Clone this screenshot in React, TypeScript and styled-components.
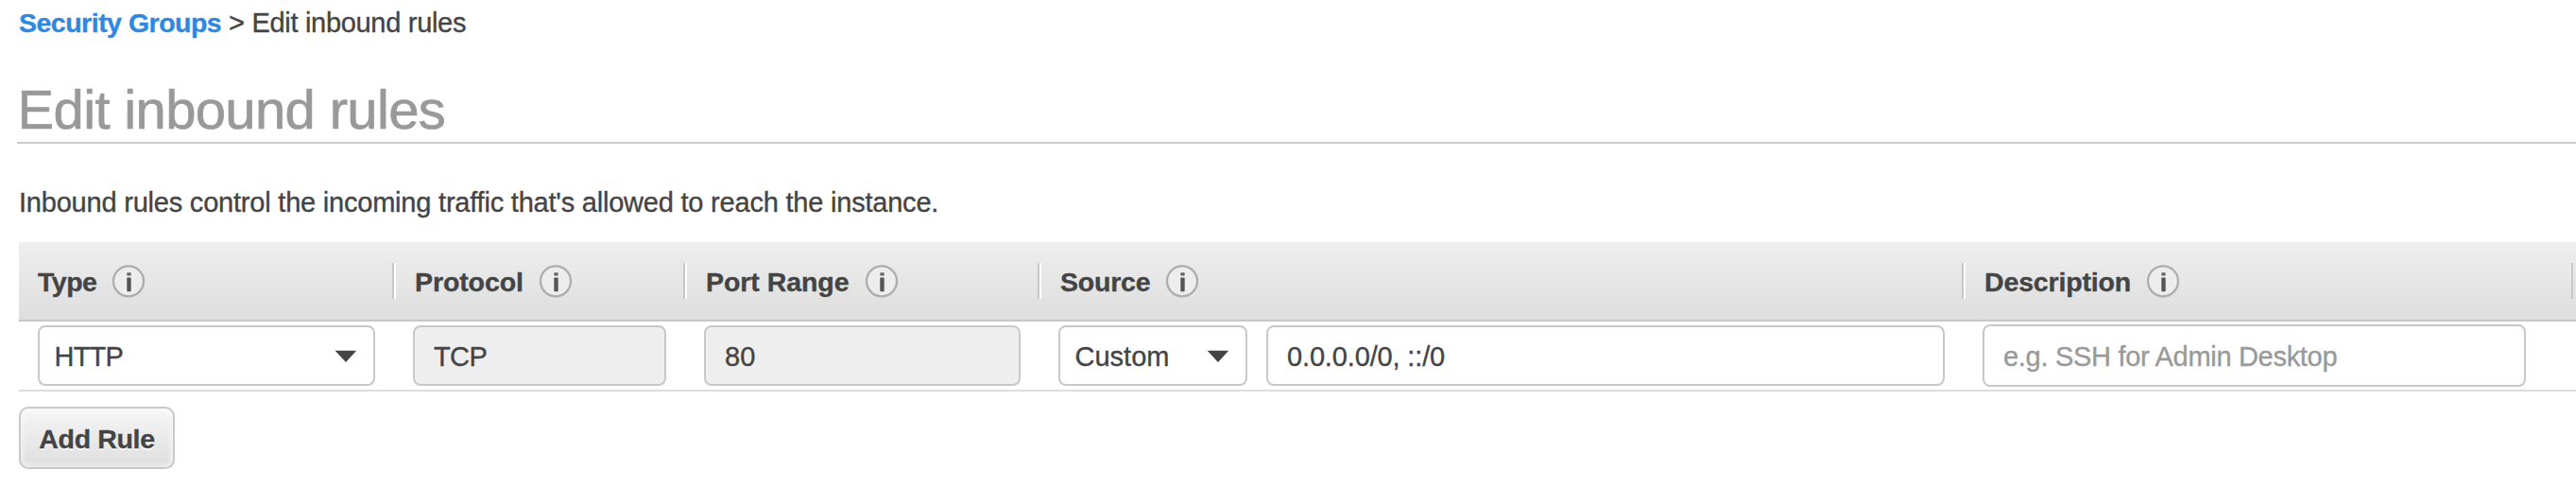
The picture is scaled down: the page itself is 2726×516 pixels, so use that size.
import React from "react";
import styled, { createGlobalStyle, css } from "styled-components";

const GlobalStyle = createGlobalStyle`
  *, *::before, *::after { box-sizing: border-box; }
  body {
    margin: 0;
    background: #fff;
    color: #444;
    font-family: "Liberation Sans", Arial, sans-serif;
    font-size: 29px;
    overflow: hidden;
    -webkit-text-stroke: 0.35px;
  }
`;

const columns = "399px 308px 375px 978px 643px 1fr";

const Page = styled.main`
  display: flex;
  flex-direction: column;
  width: 100%;
  height: 516px;
  padding-left: 18px;
`;

const Breadcrumb = styled.nav`
  padding-left: 2px;
  line-height: 48px;
  letter-spacing: -0.3px;
  white-space: pre;
`;

const BreadcrumbLink = styled.a`
  color: #2f88e0;
  font-size: 28.5px;
  font-weight: 700;
  letter-spacing: -0.5px;
  text-decoration: none;
`;

const Title = styled.h1`
  margin: 36px 0 0;
  padding-bottom: 2px;
  border-bottom: 2px solid #ccc;
  color: #999;
  font-size: 58px;
  font-weight: 400;
  line-height: 64px;
  letter-spacing: -0.65px;
  text-indent: 0.5px;
  -webkit-text-stroke: 0.7px;
`;

const Intro = styled.p`
  margin: 42px 0 22px;
  padding-left: 2px;
  line-height: 40px;
  letter-spacing: -0.21px;
`;

const Rules = styled.section`
  margin-left: 2px;
`;

const HeaderRow = styled.div`
  display: grid;
  grid-template-columns: ${columns};
  align-items: center;
  height: 84px;
  border-bottom: 2px solid #c8c8c8;
  background: linear-gradient(#eee, #dedede);
`;

const HeaderCell = styled.div<{ $first?: boolean; $last?: boolean; $tracking?: number }>`
  display: flex;
  align-items: center;
  gap: 17px;
  height: 38px;
  padding-left: 20px;
  border-right: 2px solid ${(p) => (p.$last ? "#c8c8c8" : "#fff")};
  box-shadow: ${(p) => (p.$last ? "none" : "inset -2px 0 #c8c8c8")};
  font-size: 28.5px;
  font-weight: 700;
  letter-spacing: ${(p) => p.$tracking ?? 0}px;
`;

const HeaderLabel = styled.span`
  padding-top: 2px;
  line-height: 36px;
`;

const InfoSvg = styled.svg`
  flex: none;
  width: 35px;
  height: 35px;
`;

const RuleRow = styled.div`
  display: grid;
  grid-template-columns: ${columns};
  align-items: center;
  height: 74px;
  border-bottom: 2px solid #ddd;
`;

const Cell = styled.div<{ $first?: boolean }>`
  display: flex;
  align-items: center;
  gap: 20px;
  padding-left: ${(p) => (p.$first ? 20 : 18)}px;
`;

const fieldBox = css`
  height: 64px;
  border: 2px solid #c8c8c8;
  border-radius: 8px;
  background: #fff;
  color: #444;
  font: 29px "Liberation Sans", Arial, sans-serif;
`;

const Select = styled.button<{ $width: number; $tracking?: number }>`
  ${fieldBox}
  display: flex;
  align-items: center;
  justify-content: space-between;
  width: ${(p) => p.$width}px;
  padding: 2px 17px 0 15.5px;
  letter-spacing: ${(p) => p.$tracking ?? 0}px;
`;

const Field = styled.input<{ $width: number; $tall?: boolean; $tracking?: number }>`
  ${fieldBox}
  width: ${(p) => p.$width}px;
  height: ${(p) => (p.$tall ? 66 : 64)}px;
  padding: 2px 16px 0 20px;
  letter-spacing: ${(p) => p.$tracking ?? 0}px;

  &:disabled {
    background: #eee;
  }

  &::placeholder {
    color: #999;
    opacity: 1;
  }
`;

const CaretSvg = styled.svg`
  width: 24px;
  height: 14px;
`;

const AddButton = styled.button`
  width: 165px;
  height: 66px;
  margin: 16px 0 0 2px;
  padding: 2px 0 0;
  border: 2px solid #c8c8c8;
  border-radius: 10px;
  background: linear-gradient(#f6f6f6, #dedede);
  box-shadow: inset 0 0 6px 1px rgba(255, 255, 255, 0.75);
  color: #444;
  font: 700 28.5px "Liberation Sans", Arial, sans-serif;
  letter-spacing: -0.35px;
  text-shadow: 0 2px 0 #fff;
`;

const InfoIcon = () => (
  <InfoSvg viewBox="0 0 35 35" aria-hidden="true">
    <circle cx="17" cy="17.3" r="16" fill="#ededed" stroke="#adadad" strokeWidth="2.3" />
    <rect x="15.3" y="8.2" width="4.4" height="3.3" rx="0.8" fill="#666" />
    <rect x="15.3" y="13.5" width="4.4" height="14.8" rx="0.8" fill="#555" />
  </InfoSvg>
);

const Caret = () => (
  <CaretSvg viewBox="0 0 24 14" aria-hidden="true">
    <path d="M0.6 0.8H23.2L12 13Z" fill="#444" />
  </CaretSvg>
);

const headings = [
  { label: "Type", tracking: -0.5 },
  { label: "Protocol", tracking: -0.1 },
  { label: "Port Range", tracking: -0.05 },
  { label: "Source", tracking: -0.2 },
  { label: "Description", tracking: -0.15 },
];

export default function App() {
  return (
    <>
      <GlobalStyle />
      <Page>
        <Breadcrumb>
          <BreadcrumbLink>Security Groups</BreadcrumbLink>
          {" > Edit inbound rules"}
        </Breadcrumb>
        <Title>Edit inbound rules</Title>
        <Intro>Inbound rules control the incoming traffic that's allowed to reach the instance.</Intro>
        <Rules>
          <HeaderRow>
            {headings.map(({ label, tracking }, i) => (
              <HeaderCell key={label} $last={i === headings.length - 1} $tracking={tracking}>
                <HeaderLabel>{label}</HeaderLabel>
                <InfoIcon />
              </HeaderCell>
            ))}
          </HeaderRow>
          <RuleRow>
            <Cell $first>
              <Select $width={357} $tracking={-0.8}>
                HTTP
                <Caret />
              </Select>
            </Cell>
            <Cell>
              <Field $width={268} $tracking={-0.6} defaultValue="TCP" disabled />
            </Cell>
            <Cell>
              <Field $width={335} defaultValue="80" disabled />
            </Cell>
            <Cell>
              <Select $width={200}>
                Custom
                <Caret />
              </Select>
              <Field $width={718} $tracking={-0.15} defaultValue="0.0.0.0/0, ::/0" />
            </Cell>
            <Cell>
              <Field $width={575} $tall $tracking={-0.3} placeholder="e.g. SSH for Admin Desktop" />
            </Cell>
          </RuleRow>
        </Rules>
        <AddButton>Add Rule</AddButton>
      </Page>
    </>
  );
}
